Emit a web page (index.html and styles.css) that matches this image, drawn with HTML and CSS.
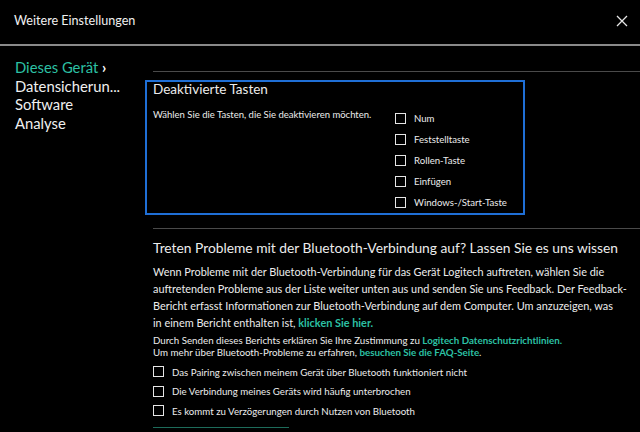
FILE: index.html
```html
<!DOCTYPE html>
<html lang="de">
<head>
<meta charset="utf-8">
<title>Weitere Einstellungen</title>
<link rel="stylesheet" href="styles.css">
</head>
<body>
<header class="titlebar">
  <h1 class="title">Weitere Einstellungen</h1>
  <button class="close" aria-label="Schließen">
    <svg width="12" height="12" viewBox="0 0 12 12"><path d="M1 1L11 11M11 1L1 11" stroke="#e6e6e6" stroke-width="1.3" fill="none"/></svg>
  </button>
</header>
<div class="rule"></div>
<div class="layout">
  <nav class="sidebar">
    <a class="nav-item active">Dieses Gerät <span class="chev">›</span></a>
    <a class="nav-item">Datensicherun...</a>
    <a class="nav-item">Software</a>
    <a class="nav-item">Analyse</a>
  </nav>
  <main class="content">
    <div class="divider"></div>
    <section class="keys-box">
      <h2 class="box-title">Deaktivierte Tasten</h2>
      <div class="keys-row">
        <p class="hint">Wählen Sie die Tasten, die Sie deaktivieren möchten.</p>
        <ul class="key-list">
          <li><span class="check"></span>Num</li>
          <li><span class="check"></span>Feststelltaste</li>
          <li><span class="check"></span>Rollen-Taste</li>
          <li><span class="check"></span>Einfügen</li>
          <li><span class="check"></span>Windows-/Start-Taste</li>
        </ul>
      </div>
    </section>
    <div class="divider lower"></div>
    <section class="bt">
      <h2 class="bt-title">Treten Probleme mit der Bluetooth-Verbindung auf? Lassen Sie es uns wissen</h2>
      <p class="bt-text">Wenn Probleme mit der Bluetooth-Verbindung für das Gerät Logitech auftreten, wählen Sie die auftretenden Probleme aus der Liste weiter unten aus und senden Sie uns Feedback. Der Feedback-Bericht erfasst Informationen zur Bluetooth-Verbindung auf dem Computer. Um anzuzeigen, was in&nbsp;einem Bericht enthalten ist, <a class="link">klicken Sie hier.</a></p>
      <p class="bt-note">Durch Senden dieses Berichts erklären Sie Ihre Zustimmung zu <a class="link">Logitech Datenschutzrichtlinien.</a><br>Um mehr über Bluetooth-Probleme zu erfahren, <a class="link">besuchen Sie die FAQ-Seite</a>.</p>
      <ul class="issue-list">
        <li><span class="check"></span>Das Pairing zwischen meinem Gerät über Bluetooth funktioniert nicht</li>
        <li><span class="check"></span>Die Verbindung meines Geräts wird häufig unterbrochen</li>
        <li><span class="check"></span>Es kommt zu Verzögerungen durch Nutzen von Bluetooth</li>
      </ul>
      <div class="send-line"></div>
    </section>
  </main>
</div>
</body>
</html>
```
FILE: styles.css
```css
* { box-sizing: border-box; }
html, body { margin: 0; padding: 0; }
body {
  width: 640px;
  height: 432px;
  overflow: hidden;
  background: #000;
  color: #ececec;
  font-family: Lato, "Open Sans", sans-serif;
}
.titlebar {
  height: 44px;
  display: flex;
  align-items: center;
  justify-content: space-between;
  padding: 0 8px 0 14px;
}
.title {
  margin: 0;
  font-size: 12.6px;
  font-weight: 400;
  color: #f0f0f0;
  padding-bottom: 3px;
}
.close {
  background: none;
  border: 0;
  padding: 4px;
  display: flex;
  margin-bottom: 3px;
}
.rule {
  height: 2px;
  background: #8a8a8a;
}
.layout {
  display: flex;
}
.sidebar {
  width: 145px;
  flex: none;
  display: flex;
  flex-direction: column;
  padding: 12px 0 0 15px;
}
.nav-item {
  font-size: 14.8px;
  line-height: 18.7px;
  color: #f0f0f0;
  white-space: nowrap;
}
.nav-item.active { color: #2cc1a4; }
.chev { color: #fff; font-weight: 700; }
.content {
  flex: 1;
  padding-top: 25px;
}
.divider {
  height: 1px;
  background: #4a4a4a;
  margin-left: 8px;
}
.keys-box {
  margin-top: 8px;
  width: 380px;
  height: 135px;
  border: 2px solid #1f6fd6;
  padding: 0 6px;
}
.box-title {
  margin: 0;
  font-size: 13.5px;
  font-weight: 400;
  line-height: 14px;
  padding-top: 0;
}
.keys-row {
  display: flex;
  justify-content: space-between;
  margin-top: 13px;
}
.hint {
  margin: 0;
  font-size: 9.5px;
  line-height: 12px;
}
.key-list {
  list-style: none;
  margin: -1px 0 0;
  padding: 0;
  width: 122px;
  font-size: 9.6px;
}
.key-list li {
  display: flex;
  align-items: center;
  height: 21px;
}
.check {
  width: 11px;
  height: 11px;
  border: 1.5px solid #e6e6e6;
  margin-right: 8px;
  flex: none;
}
.lower { margin-top: 13px; }
.bt {
  padding-left: 8px;
  padding-right: 4px;
}
.bt-title {
  margin: 10px 0 0;
  font-size: 13.8px;
  font-weight: 400;
  line-height: 18px;
  white-space: nowrap;
}
.bt-text {
  margin: 6px 0 0;
  max-width: 476px;
  font-size: 10.9px;
  line-height: 17px;
}
.link { color: #2cc1a4; font-weight: 700; }
.bt-note {
  margin: 3px 0 0;
  font-size: 9.75px;
  line-height: 12px;
}
.issue-list {
  list-style: none;
  margin: 4px 0 0;
  padding: 0;
  font-size: 9.7px;
}
.issue-list li {
  display: flex;
  align-items: center;
  height: 19.5px;
}
.send-line {
  margin-top: 6px;
  width: 136px;
  height: 1px;
  background: #1d6b5a;
}
```
